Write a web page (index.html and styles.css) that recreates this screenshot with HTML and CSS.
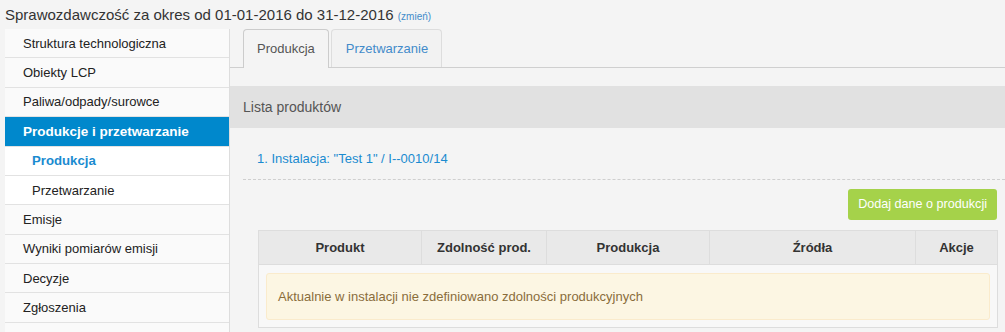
FILE: index.html
```html
<!DOCTYPE html>
<html lang="pl">
<head>
    <meta charset="UTF-8">
    <title>Sprawozdawczość - Produkcja</title>
    <link rel="stylesheet" href="styles.css">
</head>
<body>

    <div class="period">Sprawozdawczość za okres od 01-01-2016 do 31-12-2016 <a href="#" class="change">(zmień)</a></div>

    <div class="layout">
        <ul class="sidebar">
            <li><a href="#">Struktura technologiczna</a></li>
            <li><a href="#">Obiekty LCP</a></li>
            <li><a href="#">Paliwa/odpady/surowce</a></li>
            <li class="active"><a href="#">Produkcje i przetwarzanie</a></li>
            <li class="sub current"><a href="#">Produkcja</a></li>
            <li class="sub"><a href="#">Przetwarzanie</a></li>
            <li><a href="#">Emisje</a></li>
            <li><a href="#">Wyniki pomiarów emisji</a></li>
            <li><a href="#">Decyzje</a></li>
            <li><a href="#">Zgłoszenia</a></li>
        </ul>

        <div class="main">
            <div class="tabs">
                <a href="#" class="tab selected">Produkcja</a>
                <a href="#" class="tab">Przetwarzanie</a>
            </div>

            <div class="panel-head">Lista produktów</div>

            <div class="panel-body">
                <div class="install"><a href="#">1. Instalacja: "Test 1" / I--0010/14</a></div>

                <div class="actions">
                    <a href="#" class="btn-add">Dodaj dane o produkcji</a>
                </div>

                <table class="products">
                    <thead>
                        <tr>
                            <th class="c-prod">Produkt</th>
                            <th class="c-cap">Zdolność prod.</th>
                            <th class="c-out">Produkcja</th>
                            <th class="c-src">Źródła</th>
                            <th class="c-act">Akcje</th>
                        </tr>
                    </thead>
                    <tbody>
                        <tr>
                            <td colspan="5">
                                <div class="notice">Aktualnie w instalacji nie zdefiniowano zdolności produkcyjnych</div>
                            </td>
                        </tr>
                    </tbody>
                </table>
            </div>
        </div>
    </div>

</body>
</html>
```

FILE: styles.css
```css
body {
    font-family: "Liberation Sans", Arial, sans-serif;
    margin: 0;
    padding: 0 0 0 5px;
    background-color: #f4f4f4;
    color: #333;
    font-size: 13px;
}
a {
    text-decoration: none;
}
.period {
    font-size: 15px;
    line-height: 20px;
    padding-top: 5px;
    height: 24px;
    color: #333;
}
.change {
    font-size: 10px;
    color: #428bca;
}
.layout {
    display: flex;
    align-items: flex-start;
}
.sidebar {
    list-style-type: none;
    margin: 0;
    padding: 0;
    width: 224px;
    flex-shrink: 0;
    background-color: #fafafa;
    border-right: 1px solid #ddd;
    min-height: 303px;
}
.sidebar li {
    border-bottom: 1px solid #e2e2e2;
}
.sidebar li a {
    display: block;
    padding: 6.7px 10px 6.7px 18px;
    line-height: 15px;
    color: #222;
}
.sidebar li.active {
    background-color: #0088cc;
}
.sidebar li.active a {
    color: #fff;
    font-weight: bold;
    font-size: 13.5px;
}
.sidebar li.sub {
    background-color: #fff;
}
.sidebar li.sub a {
    padding-left: 27px;
}
.sidebar li.current a {
    color: #1a8bd0;
    font-weight: bold;
    font-size: 13.2px;
}
.main {
    flex: 1;
    min-width: 0;
}
.tabs {
    display: flex;
    gap: 2px;
    padding-left: 13px;
    border-bottom: 1px solid #cfcfcf;
    height: 38px;
}
.tab {
    display: block;
    height: 38px;
    box-sizing: border-box;
    padding: 0 13px 0 14px;
    line-height: 38px;
    border: 1px solid #ddd;
    border-bottom: none;
    border-radius: 4px 4px 0 0;
    color: #428bca;
    background-color: #f2f2f2;
}
.tab.selected {
    color: #555;
    background-color: #f4f4f4;
    border-color: #ccc;
    height: 39px;
    padding: 0 13px;
}
.panel-head {
    margin-top: 18px;
    background-color: #e1e1e1;
    height: 42px;
    line-height: 42px;
    padding-left: 13px;
    font-size: 14px;
    color: #555;
}
.panel-body {
    padding: 0 8px 0 13px;
}
.install {
    border-bottom: 1px dashed #cfcfcf;
    padding: 23px 0 13px 14px;
    margin-right: -8px;
    line-height: 15px;
}
.install a {
    color: #1a8bd0;
}
.actions {
    display: flex;
    justify-content: flex-end;
    padding-top: 9px;
    margin-bottom: 10px;
}
.btn-add {
    display: block;
    background-color: #a5d24a;
    color: #fff;
    padding: 0 10px;
    height: 31px;
    line-height: 31px;
    font-size: 12.6px;
    border-radius: 3px;
}
.products {
    margin-left: 15px;
    width: 740px;
    border-collapse: collapse;
    border: 1px solid #ddd;
}
.products th {
    background-color: #e9e9e9;
    border: 1px solid #ddd;
    height: 33px;
    padding: 0 8px;
    font-size: 13px;
    color: #333;
}
.c-prod { width: 146px; }
.c-cap { width: 108px; }
.c-out { width: 146px; }
.c-src { width: 189px; }
.c-act { width: 65px; }
.products td {
    background-color: #f8f8f8;
    padding: 8px 7px 7px 7px;
}
.notice {
    background-color: #fcf6e3;
    border: 1px solid #faebcc;
    border-radius: 3px;
    color: #8a6d3b;
    height: 45px;
    line-height: 45px;
    padding-left: 11px;
}
```
